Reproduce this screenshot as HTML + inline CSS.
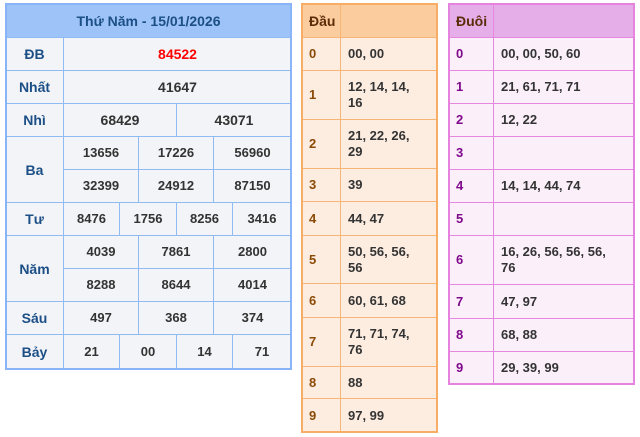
<!DOCTYPE html>
<html><head><meta charset="utf-8"><style>
*{box-sizing:border-box;margin:0;padding:0}
body{width:640px;height:437px;background:#fff;position:relative;font-family:"Liberation Sans",Arial,sans-serif;font-weight:700;font-size:13px;color:#333;overflow:hidden}
.c{position:absolute;border:1px solid #8fbaf2;display:flex;align-items:center;justify-content:center;background:#f3f4f8;line-height:16px;font-weight:700;font-family:"Liberation Sans",Arial,sans-serif}
.l{color:#1b4f86;font-size:14px}
.o{position:absolute;border:2px solid #8ab4f8}
.d{border-color:#f7b578;background:#fdede1;justify-content:flex-start;padding-left:7px}
.dn{color:#8b4a06}
.e{border-color:#e688e0;background:#fbeffa;justify-content:flex-start;padding-left:7px}
.en{color:#800a8c}
</style></head><body>
<div class="c" style="left:5px;top:3px;width:287px;height:35px;background:#9ec3f8;color:#1b4f86;font-size:14px">Thứ Năm - 15/01/2026</div>
<div class="c l" style="left:5px;top:37px;width:59px;height:34px">ĐB</div>
<div class="c" style="left:63px;top:37px;width:229px;height:34px;color:#f00;font-size:14px">84522</div>
<div class="c l" style="left:5px;top:70px;width:59px;height:34px">Nhất</div>
<div class="c" style="left:63px;top:70px;width:229px;height:34px;font-size:14px">41647</div>
<div class="c l" style="left:5px;top:103px;width:59px;height:34px">Nhì</div>
<div class="c" style="left:63px;top:103px;width:114px;height:34px;font-size:14px">68429</div>
<div class="c" style="left:176px;top:103px;width:116px;height:34px;font-size:14px">43071</div>
<div class="c l" style="left:5px;top:136px;width:59px;height:67px">Ba</div>
<div class="c" style="left:63px;top:136px;width:76px;height:34px">13656</div>
<div class="c" style="left:138px;top:136px;width:76px;height:34px">17226</div>
<div class="c" style="left:213px;top:136px;width:79px;height:34px">56960</div>
<div class="c" style="left:63px;top:169px;width:76px;height:34px">32399</div>
<div class="c" style="left:138px;top:169px;width:76px;height:34px">24912</div>
<div class="c" style="left:213px;top:169px;width:79px;height:34px">87150</div>
<div class="c l" style="left:5px;top:202px;width:59px;height:34px">Tư</div>
<div class="c" style="left:63px;top:202px;width:57px;height:34px">8476</div>
<div class="c" style="left:119px;top:202px;width:58px;height:34px">1756</div>
<div class="c" style="left:176px;top:202px;width:57px;height:34px">8256</div>
<div class="c" style="left:232px;top:202px;width:60px;height:34px">3416</div>
<div class="c l" style="left:5px;top:235px;width:59px;height:67px">Năm</div>
<div class="c" style="left:63px;top:235px;width:76px;height:34px">4039</div>
<div class="c" style="left:138px;top:235px;width:76px;height:34px">7861</div>
<div class="c" style="left:213px;top:235px;width:79px;height:34px">2800</div>
<div class="c" style="left:63px;top:268px;width:76px;height:34px">8288</div>
<div class="c" style="left:138px;top:268px;width:76px;height:34px">8644</div>
<div class="c" style="left:213px;top:268px;width:79px;height:34px">4014</div>
<div class="c l" style="left:5px;top:301px;width:59px;height:34px">Sáu</div>
<div class="c" style="left:63px;top:301px;width:76px;height:34px">497</div>
<div class="c" style="left:138px;top:301px;width:76px;height:34px">368</div>
<div class="c" style="left:213px;top:301px;width:79px;height:34px">374</div>
<div class="c l" style="left:5px;top:334px;width:59px;height:35px">Bảy</div>
<div class="c" style="left:63px;top:334px;width:57px;height:35px">21</div>
<div class="c" style="left:119px;top:334px;width:58px;height:35px">00</div>
<div class="c" style="left:176px;top:334px;width:57px;height:35px">14</div>
<div class="c" style="left:232px;top:334px;width:60px;height:35px">71</div>
<div class="o" style="left:5px;top:3px;width:287px;height:367px"></div>

<div class="c d" style="left:301px;top:3px;width:40px;height:35px;background:#fbcc9e;color:#5a2c08;font-size:14px">Đầu</div>
<div class="c d" style="left:340px;top:3px;width:98px;height:35px;background:#fbcc9e"></div>
<div class="c d dn" style="left:301px;top:37px;width:40px;height:34px">0</div><div class="c d" style="left:340px;top:37px;width:98px;height:34px">00, 00</div>
<div class="c d dn" style="left:301px;top:70px;width:40px;height:50px">1</div><div class="c d" style="left:340px;top:70px;width:98px;height:50px">12, 14, 14,<br>16</div>
<div class="c d dn" style="left:301px;top:119px;width:40px;height:50px">2</div><div class="c d" style="left:340px;top:119px;width:98px;height:50px">21, 22, 26,<br>29</div>
<div class="c d dn" style="left:301px;top:168px;width:40px;height:34px">3</div><div class="c d" style="left:340px;top:168px;width:98px;height:34px">39</div>
<div class="c d dn" style="left:301px;top:201px;width:40px;height:35px">4</div><div class="c d" style="left:340px;top:201px;width:98px;height:35px">44, 47</div>
<div class="c d dn" style="left:301px;top:235px;width:40px;height:49px">5</div><div class="c d" style="left:340px;top:235px;width:98px;height:49px">50, 56, 56,<br>56</div>
<div class="c d dn" style="left:301px;top:283px;width:40px;height:35px">6</div><div class="c d" style="left:340px;top:283px;width:98px;height:35px">60, 61, 68</div>
<div class="c d dn" style="left:301px;top:317px;width:40px;height:50px">7</div><div class="c d" style="left:340px;top:317px;width:98px;height:50px">71, 71, 74,<br>76</div>
<div class="c d dn" style="left:301px;top:366px;width:40px;height:33px">8</div><div class="c d" style="left:340px;top:366px;width:98px;height:33px">88</div>
<div class="c d dn" style="left:301px;top:398px;width:40px;height:35px">9</div><div class="c d" style="left:340px;top:398px;width:98px;height:35px">97, 99</div>
<div class="o" style="left:301px;top:3px;width:137px;height:430px;border-color:#f7ad66"></div>

<div class="c e" style="left:448px;top:3px;width:46px;height:35px;background:#e5aee8;color:#5a2c08;font-size:14px">Đuôi</div>
<div class="c e" style="left:493px;top:3px;width:142px;height:35px;background:#e5aee8"></div>
<div class="c e en" style="left:448px;top:37px;width:46px;height:34px">0</div><div class="c e" style="left:493px;top:37px;width:142px;height:34px">00, 00, 50, 60</div>
<div class="c e en" style="left:448px;top:70px;width:46px;height:34px">1</div><div class="c e" style="left:493px;top:70px;width:142px;height:34px">21, 61, 71, 71</div>
<div class="c e en" style="left:448px;top:103px;width:46px;height:34px">2</div><div class="c e" style="left:493px;top:103px;width:142px;height:34px">12, 22</div>
<div class="c e en" style="left:448px;top:136px;width:46px;height:34px">3</div><div class="c e" style="left:493px;top:136px;width:142px;height:34px"></div>
<div class="c e en" style="left:448px;top:169px;width:46px;height:34px">4</div><div class="c e" style="left:493px;top:169px;width:142px;height:34px">14, 14, 44, 74</div>
<div class="c e en" style="left:448px;top:202px;width:46px;height:34px">5</div><div class="c e" style="left:493px;top:202px;width:142px;height:34px"></div>
<div class="c e en" style="left:448px;top:235px;width:46px;height:50px">6</div><div class="c e" style="left:493px;top:235px;width:142px;height:50px">16, 26, 56, 56, 56,<br>76</div>
<div class="c e en" style="left:448px;top:284px;width:46px;height:35px">7</div><div class="c e" style="left:493px;top:284px;width:142px;height:35px">47, 97</div>
<div class="c e en" style="left:448px;top:318px;width:46px;height:34px">8</div><div class="c e" style="left:493px;top:318px;width:142px;height:34px">68, 88</div>
<div class="c e en" style="left:448px;top:351px;width:46px;height:34px">9</div><div class="c e" style="left:493px;top:351px;width:142px;height:34px">29, 39, 99</div>
<div class="o" style="left:448px;top:3px;width:187px;height:382px;border-color:#e683de"></div>
</body></html>
